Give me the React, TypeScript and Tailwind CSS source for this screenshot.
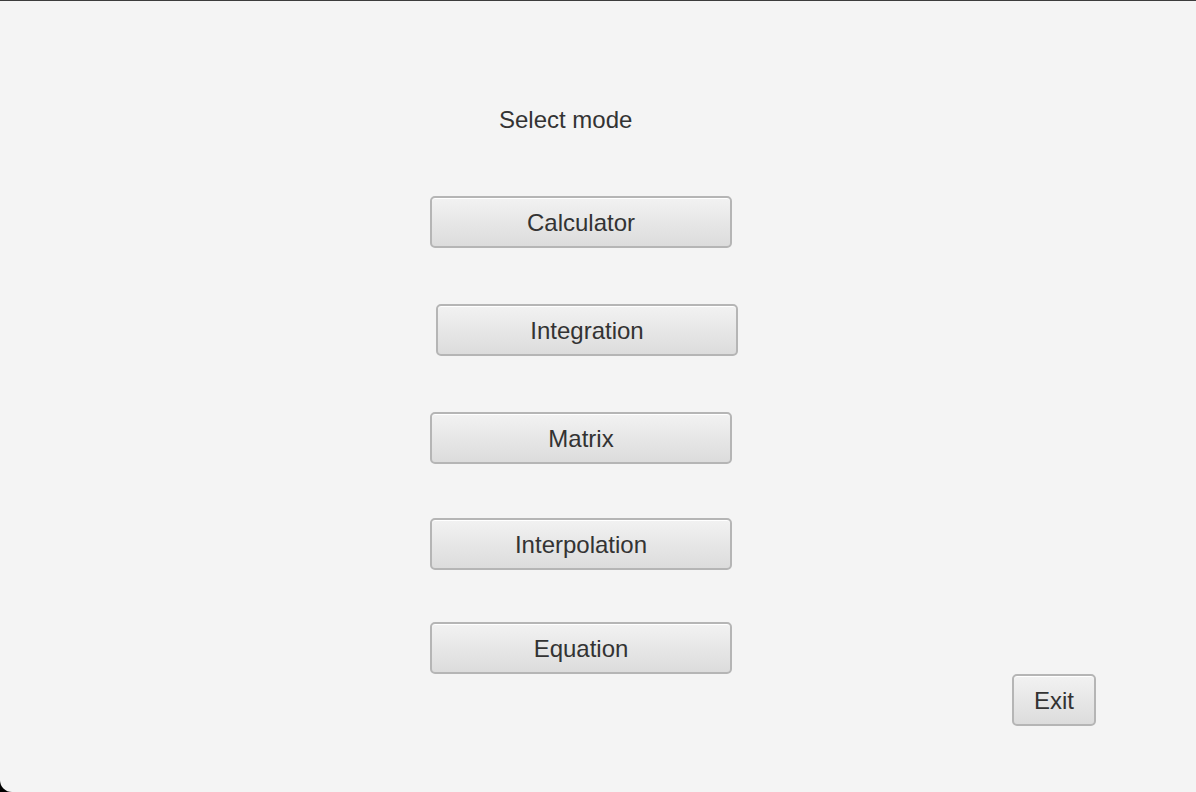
import React from 'react';

const font = { fontFamily: '"Liberation Sans", Arial, sans-serif' };

function FxButton({ label, className = '' }: { label: string; className?: string }) {
    return (
        <button
            type="button"
            className={`h-[52px] pt-[2px] rounded-[5px] border-2 border-[#b5b5b5] bg-gradient-to-b from-[#f2f2f2] to-[#dcdcdc] text-[24px] leading-none text-[#333333] shadow-[inset_0_1px_0_#ffffff] ${className}`}
        >
            {label}
        </button>
    );
}

export default function App() {
    return (
        <div className="w-[1196px] h-[792px] bg-black" style={font}>
            <div className="h-full w-full bg-[#f4f4f4] border-t border-[#3c3c3c] rounded-bl-[12px] flex flex-col pl-[430px]">
                <p className="mt-[105px] ml-[69px] text-[24px] leading-[28px] text-[#333333]">Select mode</p>
                <FxButton label="Calculator" className="mt-[62px] w-[302px]" />
                <FxButton label="Integration" className="mt-[56px] ml-[6px] w-[302px]" />
                <FxButton label="Matrix" className="mt-[56px] w-[302px]" />
                <FxButton label="Interpolation" className="mt-[54px] w-[302px]" />
                <div className="flex items-start mt-[52px]">
                    <FxButton label="Equation" className="w-[302px]" />
                    <FxButton label="Exit" className="mt-[52px] ml-[280px] w-[84px]" />
                </div>
            </div>
        </div>
    );
}
